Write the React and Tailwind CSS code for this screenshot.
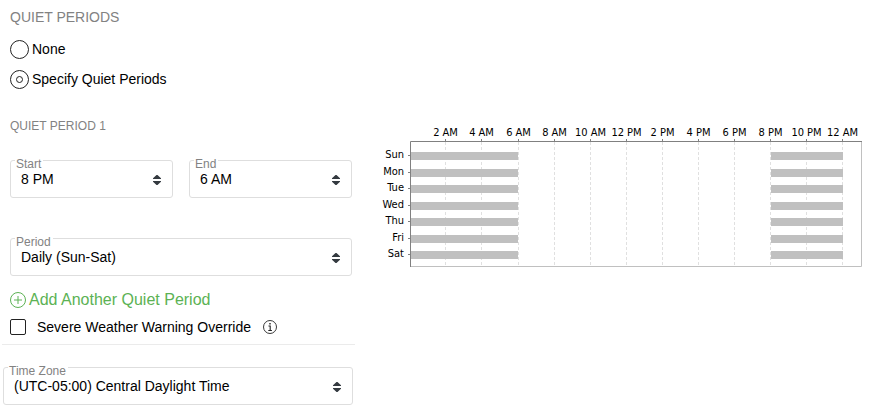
import { useState } from "react";

const DAYS = ["Sun", "Mon", "Tue", "Wed", "Thu", "Fri", "Sat"];
const HOURS = ["2 AM", "4 AM", "6 AM", "8 AM", "10 AM", "12 PM", "2 PM", "4 PM", "6 PM", "8 PM", "10 PM", "12 AM"];
const TICKS = [63, 99, 136, 172, 208, 244, 280, 316, 352, 388, 424, 460];
const ROWS = [32, 49, 65, 82, 98, 115, 131];

function SelectField({ id, label, options }) {
  return (
    <div className="relative flex-1">
      <label htmlFor={id} className="absolute -top-0.5 left-[5px] flex h-3 items-center bg-white pr-0.5 pl-px text-xs leading-4 text-[#828282]">
        {label}
      </label>
      <select id={id} className="block h-[38px] w-full appearance-none rounded-[3px] border border-[#dedede] bg-transparent pr-8 pl-2.5 text-sm text-black">
        {options.map((o) => (
          <option key={o}>{o}</option>
        ))}
      </select>
      <svg aria-hidden="true" className="pointer-events-none absolute top-[15px] right-3" width="8" height="10" viewBox="0 0 8 10" fill="#343a40">
        <path d="M3.500 0h1L8 3.200V4H0v-.8zM3.500 10h1L8 6.800V6H0v.8z" />
      </svg>
    </div>
  );
}

function Radio({ label, checked, onChange }) {
  return (
    <label className="flex h-[30px] items-center gap-[3px]">
      <input
        type="radio"
        name="quiet"
        checked={checked}
        onChange={onChange}
        className="grid size-[19px] appearance-none place-items-center rounded-full border border-[#222] checked:before:block checked:before:size-[7px] checked:before:rounded-full checked:before:border checked:before:border-[#222] checked:before:content-['']"
      />
      {label}
    </label>
  );
}

function Chart() {
  return (
    <svg role="img" aria-label="Weekly quiet periods" className="w-full" viewBox="0 0 490 150" fontSize="11" style={{ fontFamily: '"DejaVu Sans Condensed", "DejaVu Sans", sans-serif' }}>
      {TICKS.map((x, i) => (
        <g key={x}>
          <text x={x + 0.5} y="16" textAnchor="middle">{HOURS[i]}</text>
          <path d={`M${x + 0.5} 22v124`} stroke="#e0e0e0" strokeDasharray="3 2" />
        </g>
      ))}
      {ROWS.map((y, i) => (
        <g key={y}>
          <text x="22" y={y + 6} textAnchor="end">{DAYS[i]}</text>
          <path d={`M26 ${y + 3.5}h2`} stroke="#808080" />
          <path d={`M29 ${y}h107v8h-107zM389 ${y}h72v8h-72z`} fill="#c0c0c0" />
        </g>
      ))}
      <path d="M479.5 21v125.500H28" fill="none" stroke="#c0c0c0" />
      <path d="M480 21.500H28.500V147" fill="none" stroke="#808080" />
      {TICKS.map((x) => (
        <path key={x} d={`M${x + 0.5} 19v2`} stroke="#808080" />
      ))}
    </svg>
  );
}

export default function App() {
  const [mode, setMode] = useState("specify");
  return (
    <main className="flex items-start bg-white font-['Liberation_Sans',Arial,sans-serif] text-sm text-black">
      <section className="w-[355px] shrink-0">
        <div className="pr-[3px] pl-2.5">
          <h1 className="pt-2 leading-[18px] text-[#828282]">QUIET PERIODS</h1>
          <div className="pt-2">
            <Radio label="None" checked={mode === "none"} onChange={() => setMode("none")} />
            <Radio label="Specify Quiet Periods" checked={mode === "specify"} onChange={() => setMode("specify")} />
          </div>
          <h2 className="pt-6 text-xs leading-4 text-[#828282]">QUIET PERIOD 1</h2>
          <div className="flex gap-4 pt-[26px]">
            <SelectField id="start" label="Start" options={["8 PM", "9 PM", "10 PM"]} />
            <SelectField id="end" label="End" options={["6 AM", "7 AM", "8 AM"]} />
          </div>
          <div className="flex pt-10">
            <SelectField id="period" label="Period" options={["Daily (Sun-Sat)", "Weekdays (Mon-Fri)"]} />
          </div>
          <button type="button" className="mt-3 flex h-6 items-center gap-[3px] text-base text-[#5cb254]">
            <svg aria-hidden="true" width="16" height="16" viewBox="0 0 16 16" fill="none" stroke="currentColor">
              <circle cx="8" cy="8" r="7.500" />
              <path d="M8 4v8M4 8h8" />
            </svg>
            Add Another Quiet Period
          </button>
          <div className="flex h-[30px] items-center">
            <input id="override" type="checkbox" className="size-4 appearance-none rounded-xs border border-[#222] checked:bg-[#222]" />
            <label htmlFor="override" className="pl-[11px]">Severe Weather Warning Override</label>
            <svg aria-hidden="true" className="ml-3" width="14" height="14" viewBox="0 0 14 14" fill="none" stroke="#222">
              <circle cx="7" cy="7" r="6.500" strokeWidth="0.9" />
              <path d="M5.500 6h1.700v4.500M5.300 10.500h3.600" strokeWidth="1.100" />
              <path d="M6.300 3.800h1.400" strokeWidth="1.400" />
            </svg>
          </div>
        </div>
        <hr className="mt-0.5 ml-0.5 border-[#ebebeb]" />
        <div className="flex pt-[22px] pr-0.5 pb-2 pl-[3px]">
          <SelectField id="zone" label="Time Zone" options={["(UTC-05:00) Central Daylight Time", "(UTC-06:00) Mountain Daylight Time"]} />
        </div>
      </section>
      <section className="min-w-0 flex-1 pt-[120px] pl-[27px]">
        <Chart />
      </section>
    </main>
  );
}
